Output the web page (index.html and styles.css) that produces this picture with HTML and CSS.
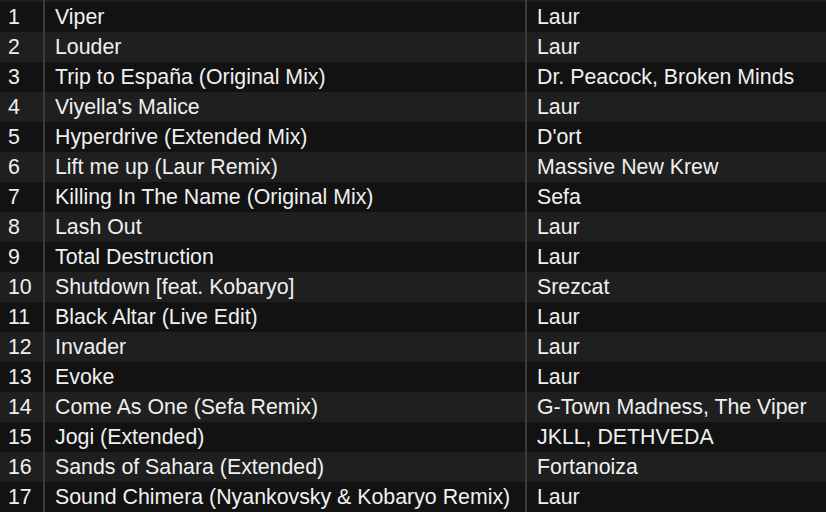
FILE: index.html
```html
<!DOCTYPE html>
<html lang="en">
<head>
    <meta charset="UTF-8">
    <title>Tracklist</title>
    <link rel="stylesheet" href="styles.css">
</head>
<body>
    <div class="tracklist">
        <div class="row row-even partial"><span class="num"></span><span class="title"></span><span class="artist"></span></div>
        <div class="row"><span class="num">1</span><span class="title">Viper</span><span class="artist">Laur</span></div>
        <div class="row row-even"><span class="num">2</span><span class="title">Louder</span><span class="artist">Laur</span></div>
        <div class="row"><span class="num">3</span><span class="title">Trip to España (Original Mix)</span><span class="artist">Dr. Peacock, Broken Minds</span></div>
        <div class="row row-even"><span class="num">4</span><span class="title">Viyella's Malice</span><span class="artist">Laur</span></div>
        <div class="row"><span class="num">5</span><span class="title">Hyperdrive (Extended Mix)</span><span class="artist">D'ort</span></div>
        <div class="row row-even"><span class="num">6</span><span class="title">Lift me up (Laur Remix)</span><span class="artist">Massive New Krew</span></div>
        <div class="row"><span class="num">7</span><span class="title">Killing In The Name (Original Mix)</span><span class="artist">Sefa</span></div>
        <div class="row row-even"><span class="num">8</span><span class="title">Lash Out</span><span class="artist">Laur</span></div>
        <div class="row"><span class="num">9</span><span class="title">Total Destruction</span><span class="artist">Laur</span></div>
        <div class="row row-even"><span class="num">10</span><span class="title">Shutdown [feat. Kobaryo]</span><span class="artist">Srezcat</span></div>
        <div class="row"><span class="num">11</span><span class="title">Black Altar (Live Edit)</span><span class="artist">Laur</span></div>
        <div class="row row-even"><span class="num">12</span><span class="title">Invader</span><span class="artist">Laur</span></div>
        <div class="row"><span class="num">13</span><span class="title">Evoke</span><span class="artist">Laur</span></div>
        <div class="row row-even"><span class="num">14</span><span class="title">Come As One (Sefa Remix)</span><span class="artist">G-Town Madness, The Viper</span></div>
        <div class="row"><span class="num">15</span><span class="title">Jogi (Extended)</span><span class="artist">JKLL, DETHVEDA</span></div>
        <div class="row row-even"><span class="num">16</span><span class="title">Sands of Sahara (Extended)</span><span class="artist">Fortanoiza</span></div>
        <div class="row"><span class="num">17</span><span class="title">Sound Chimera (Nyankovsky &amp; Kobaryo Remix)</span><span class="artist">Laur</span></div>
    </div>
</body>
</html>
```

FILE: styles.css
```css
html, body {
    margin: 0;
    padding: 0;
    background: #121212;
}
body {
    font-family: "Liberation Sans", Arial, sans-serif;
    font-size: 21.33px;
    color: #f0f0f0;
    overflow: hidden;
}
.tracklist {
    display: flex;
    flex-direction: column;
}
.row {
    display: grid;
    grid-template-columns: 43px 482px 1fr;
    height: 30px;
    line-height: 30px;
    background: #121212;
    white-space: nowrap;
}
.row-even {
    background: #1f1f1f;
}
.row.partial {
    height: 2px;
}
.num {
    padding-left: 8px;
}
.title,
.artist {
    padding-left: 10px;
    border-left: 2px solid #3a3a3a;
}
```
